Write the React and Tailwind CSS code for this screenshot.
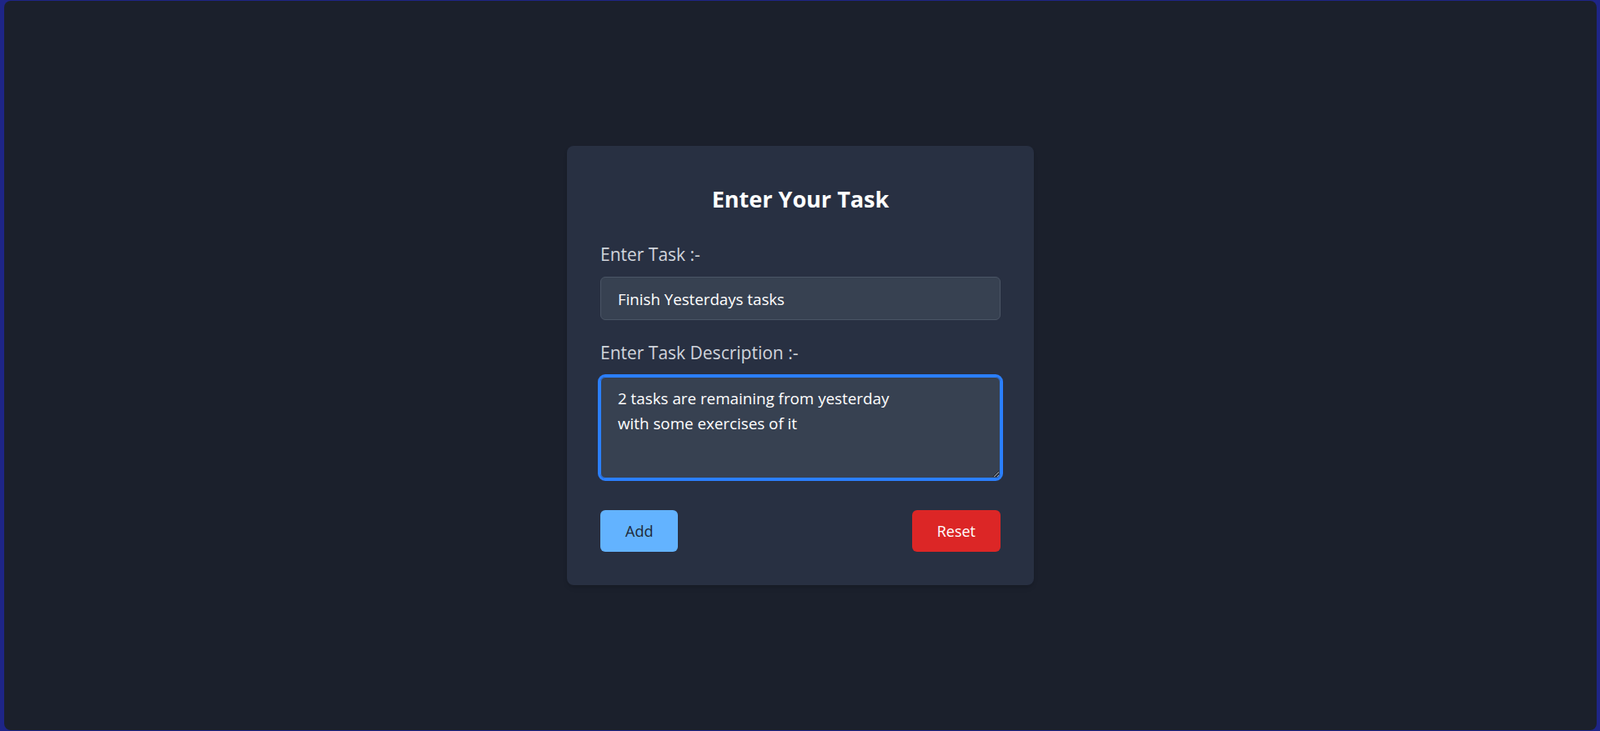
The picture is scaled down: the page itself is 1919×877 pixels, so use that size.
import { useState } from "react";

const TaskForm = () => {
  const [task, setTask] = useState("Finish Yesterdays tasks");
  const [desc, setDesc] = useState(
    "2 tasks are remaining from yesterday\nwith some exercises of it"
  );

  const handleReset = () => {
    setTask("");
    setDesc("");
  };

  return (
    <div className="w-[560px] bg-[#283042] rounded-lg pt-[48px] px-10 pb-10 shadow-md">
      <h2 className="text-[27px] leading-8 font-bold text-white text-center mb-9">
        Enter Your Task
      </h2>

      <label className="block text-[21px] leading-7 text-gray-300 mb-[13px]">
        Enter Task :-
      </label>
      <input
        type="text"
        value={task}
        onChange={(e) => setTask(e.target.value)}
        className="block w-full h-[52px] px-5 text-[18.7px] leading-7 text-white bg-[#374151] border border-gray-600 rounded-md focus:outline-none"
      />

      <label className="block mt-[25px] text-[21px] leading-7 text-gray-300 mb-[15px]">
        Enter Task Description :-
      </label>
      <textarea
        value={desc}
        onChange={(e) => setDesc(e.target.value)}
        className="block w-full h-[122px] px-5 py-2.5 text-[18.8px] leading-[30px] text-white bg-[#374151] border border-blue-500 rounded-md outline-[3px] outline-solid outline-blue-500"
      />

      <div className="flex justify-between mt-[38px]">
        <button className="h-[50px] px-[30px] text-lg text-gray-800 bg-[#63b3ff] rounded-md hover:bg-blue-400">
          Add
        </button>
        <button
          onClick={handleReset}
          className="h-[50px] px-[30px] text-lg text-white bg-[#dc2626] rounded-md hover:bg-red-700"
        >
          Reset
        </button>
      </div>
    </div>
  );
};

export default function App() {
  return (
    <div
      className="h-screen bg-[#1e2587] pl-[5px] pr-1 pt-px pb-px"
      style={{ fontFamily: '"Open Sans", "Noto Sans", sans-serif' }}
    >
      <div className="h-full bg-[#1b202c] rounded-lg flex items-center justify-center">
        <TaskForm />
      </div>
    </div>
  );
}
